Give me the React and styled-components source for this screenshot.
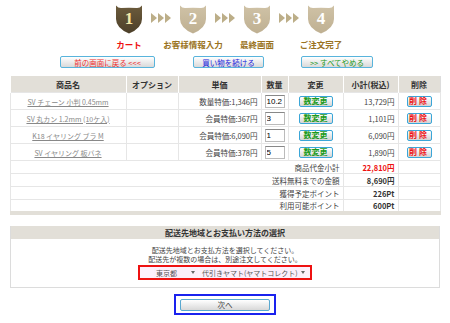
import React from "react"
import styled, { createGlobalStyle } from "styled-components"

const Global = createGlobalStyle`
  body {
    margin: 0;
    background: #fff;
    font-family: "Noto Sans CJK JP", "Liberation Sans", sans-serif;
    color: #333;
  }
`

const Page = styled.div`
  width: 450px;
  height: 323px;
  overflow: hidden;
  display: flex;
  flex-direction: column;
  align-items: center;
`

const Steps = styled.div`
  display: grid;
  grid-template-columns: 28px 36px 28px 36px 28px 36px 28px;
  grid-template-rows: 29px 17px;
  margin-top: 5px;
  row-gap: 4px;
`

const Shield = styled.div`
  position: relative;
  width: 28px;
  height: 29px;
  display: flex;
  align-items: center;
  justify-content: center;
  svg { position: absolute; inset: 0; }
`

const Num = styled.span`
  position: relative;
  font-family: "Liberation Serif", "DejaVu Serif", serif;
  font-weight: bold;
  font-size: 17px;
  margin-top: -2px;
  color: ${p => (p.$active ? "#f5e7a6" : "#fff")};
`

const Arrows = styled.div`
  display: flex;
  align-items: center;
  justify-content: center;
  gap: 1px;
  padding-bottom: 4px;
`

const Tri = styled.span`
  width: 0;
  height: 0;
  border-top: 5px solid transparent;
  border-bottom: 5px solid transparent;
  border-left: 6px solid #bcae88;
`

const StepLabel = styled.div`
  grid-row: 2;
  grid-column: ${p => p.$col};
  display: flex;
  justify-content: center;
  white-space: nowrap;
  font-size: 8.5px;
  font-weight: bold;
  color: ${p => (p.$active ? "#ee1111" : "#9a7322")};
`

const NavRow = styled.div`
  width: 450px;
  display: flex;
  margin-top: 1px;
  height: 15px;
`

const NavBtn = styled.button`
  box-sizing: border-box;
  height: 12px;
  width: ${p => p.$w}px;
  margin-left: ${p => p.$ml}px;
  padding: 0;
  border: 1px solid #58b4dc;
  border-radius: 2px;
  background: linear-gradient(#ffffff, #d9d9d9);
  font-family: inherit;
  font-size: 7.5px;
  line-height: 9px;
  color: ${p => p.$color};
`

const Cart = styled.table`
  width: 430px;
  margin-top: 5px;
  border-collapse: collapse;
  border-left: 1px solid #ddd;
  border-right: 1px solid #ddd;
  border-bottom: 4px solid #e2dfd8;
  font-size: 7.5px;
  table-layout: fixed;

  th {
    background: #e2dfd8;
    height: 16px;
    font-weight: bold;
    font-size: 8px;
    color: #333;
    border-left: 1px solid #fff;
    padding: 0;
  }
  td {
    border: 1px solid #e6e6e6;
    padding: 0 3px;
    white-space: nowrap;
  }
`

const ItemRow = styled.tr`
  height: 17px;
`

const SumRow = styled.tr`
  height: 13px;
`

const ItemLink = styled.a`
  color: #888;
  text-decoration: underline;
  font-size: 7px;
`

const Cell = styled.td`
  text-align: ${p => p.$align || "center"};
  color: ${p => p.$color || "#444"};
  font-weight: ${p => (p.$bold ? "bold" : "normal")};
`

const Qty = styled.input`
  box-sizing: border-box;
  width: 20px;
  height: 13px;
  padding: 0 1px;
  border: 1px solid #bbb;
  border-top-color: #888;
  font-size: 8px;
  font-family: "Liberation Sans", sans-serif;
`

const SmallBtn = styled.button`
  box-sizing: border-box;
  width: ${p => p.$w}px;
  height: 11px;
  padding: 0;
  border: 1px solid #3aa6d8;
  border-radius: 2px;
  background: linear-gradient(#ffffff, #d4d4d4);
  font-family: inherit;
  font-size: 8px;
  line-height: 8px;
  letter-spacing: ${p => p.$ls || 0}px;
  color: ${p => p.$color};
  font-weight: bold;
`

const Section = styled.div`
  box-sizing: border-box;
  width: 430px;
  margin-top: 11px;
  border: 1px solid #dcdcdc;
  border-top: none;
  height: 62px;
  display: flex;
  flex-direction: column;
  align-items: center;
`

const SectionHead = styled.div`
  align-self: stretch;
  background: #e2dfd8;
  height: 13px;
  line-height: 13px;
  text-align: center;
  font-size: 8px;
  font-weight: bold;
`

const Note = styled.p`
  margin: 7px 0 0;
  font-size: 7px;
  line-height: 9px;
  text-align: center;
  color: #444;
`

const Picker = styled.div`
  box-sizing: border-box;
  width: 174px;
  height: 15px;
  margin-top: 1px;
  border: 2px solid #ee1111;
  background: #fdf0fb;
  display: flex;
  align-items: center;
  padding-left: 14px;
  gap: 2px;
`

const Select = styled.div`
  box-sizing: border-box;
  width: ${p => p.$w}px;
  height: 10px;
  display: flex;
  align-items: center;
  justify-content: space-between;
  white-space: nowrap;
  font-size: 7px;
  color: #555;
  background: #fbeef9;
  padding: 0 3px 0 2px;
  &::after {
    content: "";
    flex-shrink: 0;
    margin-left: 3px;
    border-top: 3px solid #666;
    border-left: 2px solid transparent;
    border-right: 2px solid transparent;
  }
`

const NextBox = styled.div`
  box-sizing: border-box;
  margin-top: 6px;
  width: 102px;
  height: 21px;
  border: 2px solid #1a22ee;
  display: flex;
  align-items: center;
  justify-content: center;
`

const NextBtn = styled.button`
  box-sizing: border-box;
  width: 90px;
  height: 12px;
  padding: 0;
  border: 1px solid #58a8d0;
  border-radius: 2px;
  background: linear-gradient(#ffffff, #d8d8d8);
  font-family: inherit;
  font-size: 7.5px;
  line-height: 8px;
  color: #444;
`

const ShieldIcon = ({ active }) => (
  <svg width="28" height="29" viewBox="0 0 28 29">
    <defs>
      <linearGradient id={active ? "ga" : "gb"} x1="0" y1="0" x2="0" y2="1">
        <stop offset="0" stopColor={active ? "#6c5b3c" : "#cfc2a6"} />
        <stop offset="1" stopColor={active ? "#4c3f29" : "#bfb092"} />
      </linearGradient>
    </defs>
    <path
      d="M1 0.5 Q3 3 6 3 Q14 2.5 22 3 Q25 3 27 0.5 L27 14 Q27 23 14 28.5 Q1 23 1 14 Z"
      fill={`url(#${active ? "ga" : "gb"})`}
    />
  </svg>
)

const steps = [
  { n: 1, label: "カート", active: true },
  { n: 2, label: "お客様情報入力" },
  { n: 3, label: "最終画面" },
  { n: 4, label: "ご注文完了" },
]

const items = [
  { name: "SV チェーン 小判 0.45mm", price: "数量特価:1,346円", qty: "10.2", sub: "13,729円" },
  { name: "SV 丸カン 1.2mm (10ケ入)", price: "会員特価:367円", qty: "3", sub: "1,101円" },
  { name: "K18 イヤリング ブラ M", price: "会員特価:6,090円", qty: "1", sub: "6,090円" },
  { name: "SV イヤリング 板バネ", price: "会員特価:378円", qty: "5", sub: "1,890円" },
]

const sums = [
  { label: "商品代金小計", value: "22,810円", color: "#ee1111" },
  { label: "送料無料までの金額", value: "8,690円" },
  { label: "獲得予定ポイント", value: "226Pt" },
  { label: "利用可能ポイント", value: "600Pt" },
]

export default function App() {
  return (
    <>
      <Global />
      <Page>
        <Steps>
          {steps.map((s, i) => (
            <React.Fragment key={s.n}>
              <Shield style={{ gridColumn: i * 2 + 1 }}>
                <ShieldIcon active={s.active} />
                <Num $active={s.active}>{s.n}</Num>
              </Shield>
              {i < 3 && (
                <Arrows style={{ gridColumn: i * 2 + 2 }}>
                  <Tri /><Tri /><Tri />
                </Arrows>
              )}
              <StepLabel $col={i * 2 + 1} $active={s.active}>{s.label}</StepLabel>
            </React.Fragment>
          ))}
        </Steps>

        <NavRow>
          <NavBtn $w={95} $ml={60} $color="#ee3333">前の画面に戻る &lt;&lt;&lt;</NavBtn>
          <NavBtn $w={71} $ml={38} $color="#2222dd">買い物を続ける</NavBtn>
          <NavBtn $w={72} $ml={37} $color="#229922">&gt;&gt; すべてやめる</NavBtn>
        </NavRow>

        <Cart>
          <colgroup>
            <col style={{ width: 116 }} />
            <col style={{ width: 52 }} />
            <col style={{ width: 83 }} />
            <col style={{ width: 27 }} />
            <col style={{ width: 55 }} />
            <col style={{ width: 55 }} />
            <col style={{ width: 42 }} />
          </colgroup>
          <thead>
            <tr>
              <th>商品名</th>
              <th>オプション</th>
              <th>単価</th>
              <th>数量</th>
              <th>変更</th>
              <th>小計(税込)</th>
              <th>削除</th>
            </tr>
          </thead>
          <tbody>
            {items.map(it => (
              <ItemRow key={it.name}>
                <Cell><ItemLink href="#">{it.name}</ItemLink></Cell>
                <Cell />
                <Cell $align="right">{it.price}</Cell>
                <Cell><Qty defaultValue={it.qty} /></Cell>
                <Cell><SmallBtn $w={34} $color="#1a9a1a">数変更</SmallBtn></Cell>
                <Cell $align="right">{it.sub}</Cell>
                <Cell><SmallBtn $w={25} $ls={2} $color="#ee1111">削除</SmallBtn></Cell>
              </ItemRow>
            ))}
            {sums.map(s => (
              <SumRow key={s.label}>
                <Cell colSpan={5} $align="right">{s.label}</Cell>
                <Cell $align="right" $bold $color={s.color || "#333"}>{s.value}</Cell>
                <Cell />
              </SumRow>
            ))}
          </tbody>
        </Cart>

        <Section>
          <SectionHead>配送先地域とお支払い方法の選択</SectionHead>
          <Note>
            配送先地域とお支払方法を選択してください。<br />
            配送先が複数の場合は、別途注文してください。
          </Note>
          <Picker>
            <Select $w={44}>東京都</Select>
            <Select $w={104}>代引きヤマト(ヤマトコレクト)</Select>
          </Picker>
        </Section>

        <NextBox>
          <NextBtn>次へ</NextBtn>
        </NextBox>
      </Page>
    </>
  )
}
